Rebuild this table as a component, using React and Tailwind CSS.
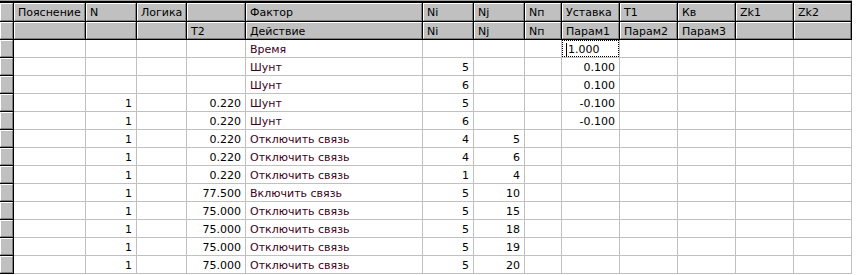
const cols =
  "grid grid-cols-[14px_72px_51px_50px_59px_177px_51px_51px_37px_58px_58px_58px_58px_58px]";

const head1 = ["", "Пояснение", "N", "Логика", "", "Фактор", "Ni", "Nj", "Nп", "Уставка", "T1", "Кв", "Zk1", "Zk2"];
const head2 = ["", "", "", "", "T2", "Действие", "Ni", "Nj", "Nп", "Парам1", "Парам2", "Парам3", "", ""];

// n, t2, factor, ni, nj, value
const rows = [
  ["", "", "Время", "", "", "1.000"],
  ["", "", "Шунт", "5", "", "0.100"],
  ["", "", "Шунт", "6", "", "0.100"],
  ["1", "0.220", "Шунт", "5", "", "-0.100"],
  ["1", "0.220", "Шунт", "6", "", "-0.100"],
  ["1", "0.220", "Отключить связь", "4", "5", ""],
  ["1", "0.220", "Отключить связь", "4", "6", ""],
  ["1", "0.220", "Отключить связь", "1", "4", ""],
  ["1", "77.500", "Включить связь", "5", "10", ""],
  ["1", "75.000", "Отключить связь", "5", "15", ""],
  ["1", "75.000", "Отключить связь", "5", "18", ""],
  ["1", "75.000", "Отключить связь", "5", "19", ""],
  ["1", "75.000", "Отключить связь", "5", "20", ""],
];

const HeadCell = ({ children }) => (
  <div className="border-r border-b border-black min-w-0">
    <div className="h-full bg-[#c0c0c0] border border-t-white border-l-white border-r-[#808080] border-b-[#808080] pl-[3px] pt-[1px] flex items-center whitespace-nowrap overflow-hidden text-black">
      {children}
    </div>
  </div>
);

const Cell = ({ children, right, className = "" }) => (
  <div
    className={`border-r border-b border-[#c0c0c0] bg-white flex items-center pt-[1px] whitespace-nowrap overflow-hidden min-w-0 ${
      right ? "justify-end pr-[4px]" : "pl-[4px]"
    } ${className}`}
  >
    {children}
  </div>
);

const EditCell = ({ children }) => (
  <div className="border-r border-b border-[#c0c0c0] bg-white min-w-0">
    <div className="h-full border border-dotted border-black flex items-center pl-[3px] pt-[1px]">
      <span className="w-px h-[13px] bg-black mr-px" />
      {children}
    </div>
  </div>
);

export default function App() {
  return (
    <div
      className="w-[859px] h-[275px] bg-white overflow-hidden text-[11px] leading-none text-black"
      style={{ fontFamily: '"DejaVu Sans", Verdana, sans-serif' }}
    >
      <div className="w-[852px]">
        <div className="h-px bg-[#a0a0a0]" />
        <div className="h-[2px] bg-black" />

        <div className={`${cols} h-[19px]`}>
          {head1.map((h, i) => (
            <HeadCell key={i}>{h}</HeadCell>
          ))}
        </div>
        <div className={`${cols} h-[18px]`}>
          {head2.map((h, i) => (
            <HeadCell key={i}>{h}</HeadCell>
          ))}
        </div>

        {rows.map((r, i) => (
          <div key={i} className={`${cols} h-[18px]`}>
            <HeadCell />
            <Cell />
            <Cell right>{r[0]}</Cell>
            <Cell />
            <Cell right>{r[1]}</Cell>
            <Cell className="text-[#400020]">{r[2]}</Cell>
            <Cell right>{r[3]}</Cell>
            <Cell right>{r[4]}</Cell>
            <Cell />
            {i === 0 ? <EditCell>{r[5]}</EditCell> : <Cell right>{r[5]}</Cell>}
            <Cell />
            <Cell />
            <Cell />
            <Cell />
          </div>
        ))}
      </div>
    </div>
  );
}
